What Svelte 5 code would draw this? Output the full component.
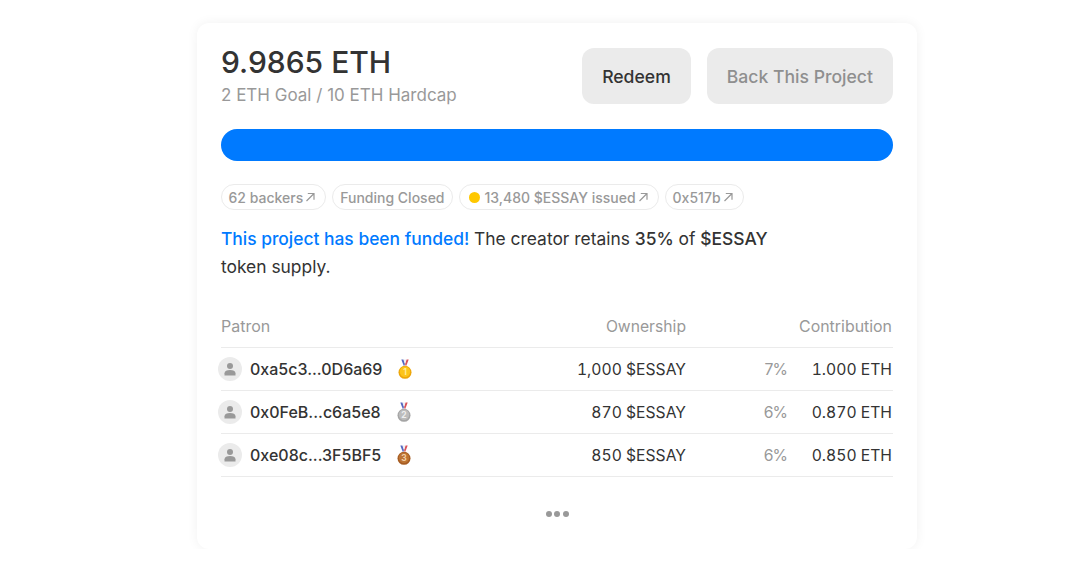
<script>
  const chips = [
    { label: '62 backers', arrow: true },
    { label: 'Funding Closed' },
    { label: '13,480 $ESSAY issued', arrow: true, dot: true },
    { label: '0x517b', arrow: true }
  ];

  const patrons = [
    { address: '0xa5c3...0D6a69', place: 1, amount: '1,000 $ESSAY', share: '7%', eth: '1.000 ETH', light: '#fcc419', dark: '#eda60a', text: '#ffeb99' },
    { address: '0x0FeB...c6a5e8', place: 2, amount: '870 $ESSAY', share: '6%', eth: '0.870 ETH', light: '#bcbcbc', dark: '#a5a5a5', text: '#eeeeee' },
    { address: '0xe08c...3F5BF5', place: 3, amount: '850 $ESSAY', share: '6%', eth: '0.850 ETH', light: '#bd7434', dark: '#a65c22', text: '#f3cfa8' }
  ];
</script>

<main class="card">
  <header class="top">
    <div>
      <h1>9.9865 ETH</h1>
      <p class="goal">2 ETH Goal / 10 ETH Hardcap</p>
    </div>
    <div class="actions">
      <button class="btn">Redeem</button>
      <button class="btn muted">Back This Project</button>
    </div>
  </header>

  <div class="bar"></div>

  <div class="chips">
    {#each chips as chip}
      <span class="chip">
        {#if chip.dot}<i class="dot"></i>{/if}
        {chip.label}
        {#if chip.arrow}
          <svg class="arrow" viewBox="-1 0 15 12" width="15" height="12" fill="none" stroke="currentColor" stroke-width="1.2">
            <path d="M2.500 10 9.500 3M3.800 2.500h6.200v6.200" />
          </svg>
        {/if}
      </span>
    {/each}
  </div>

  <p class="note">
    <span class="blue">This project has been funded!</span> The creator retains <b>35%</b> of <b>$ESSAY</b> token supply.
  </p>

  <div class="table">
    <div class="row head">
      <span>Patron</span>
      <span class="right">Ownership</span>
      <span></span>
      <span class="right">Contribution</span>
    </div>
    {#each patrons as p}
      <div class="row">
        <span class="who">
          <span class="avatar">
            <svg viewBox="0 0 24 24" width="24" height="24" fill="#999">
              <circle cx="12" cy="9" r="3" />
              <path d="M6.500 18.600v-2.400c0-2 2.400-3.200 5.500-3.200s5.500 1.200 5.500 3.200v2.400z" />
            </svg>
          </span>
          <span class="address">{p.address}</span>
          <svg class="medal" viewBox="0 0 14 20" width="14" height="20">
            <path d="M3.300 0.500h2.200L7 5 6 7.500z" fill="#5468c0" />
            <path d="M10.700 0.500H8.500L7 5 8 7.500z" fill="#d9535a" />
            <path d="M5.500 0.500h3L7 5z" fill="#eeeef4" />
            <circle cx="7" cy="13.300" r="6.500" fill={p.dark} />
            <circle cx="7" cy="12.800" r="5.200" fill={p.light} />
            <text x="7" y="16" text-anchor="middle" font-size="8.500" font-weight="700" fill={p.text}>{p.place}</text>
          </svg>
        </span>
        <span class="right nums">{p.amount}</span>
        <span class="right share">{p.share}</span>
        <span class="right nums">{p.eth}</span>
      </div>
    {/each}
  </div>

  <div class="more"><i></i><i></i><i></i></div>
</main>

<style>
  :global(body) {
    background: #fff;
  }
  .card {
    box-sizing: border-box;
    width: 720px;
    height: 526px;
    margin: 23px 0 0 197px;
    padding: 20px 24px 0;
    background: #fff;
    border-radius: 12px;
    box-shadow: 0 0 12px rgba(0, 0, 0, 0.06);
    font-family: Inter, sans-serif;
    color: #333;
  }
  .top {
    display: flex;
    justify-content: space-between;
    align-items: flex-start;
  }
  h1 {
    margin: 0;
    font-size: 30px;
    line-height: 38px;
    font-weight: 500;
  }
  .goal {
    margin: 1px 0 0;
    font-size: 17px;
    line-height: 26px;
    color: #999;
  }
  .actions {
    display: flex;
    gap: 16px;
    margin-top: 5px;
  }
  .btn {
    height: 56px;
    padding: 0 20px;
    border: none;
    border-radius: 12px;
    background: #ebebeb;
    font-family: inherit;
    font-size: 17.6px;
    font-weight: 500;
    color: #333;
  }
  .muted {
    color: #8f8f8f;
  }
  .bar {
    height: 32px;
    margin-top: 21px;
    border-radius: 16px;
    background: #007aff;
  }
  .chips {
    display: flex;
    gap: 6px;
    margin: 23px 0 0 -0.5px;
  }
  .chip {
    display: flex;
    align-items: center;
    box-sizing: border-box;
    height: 26px;
    padding: 0 7px;
    border: 1px solid #ebebeb;
    border-radius: 13px;
    font-size: 14px;
    font-weight: 500;
    color: #999;
  }
  .dot {
    width: 11px;
    height: 11px;
    margin: 0 5px 0 2px;
    border-radius: 50%;
    background: #ffc800;
  }
  .note {
    width: 570px;
    margin: 15px 0 0;
    font-size: 17.4px;
    line-height: 28px;
  }
  .blue {
    color: #007aff;
    font-weight: 500;
  }
  .note b {
    font-weight: 500;
  }
  .table {
    margin-top: 35px;
  }
  .row {
    display: grid;
    grid-template-columns: 300px 165px 101px 105px;
    align-items: center;
    height: 42px;
    border-bottom: 1px solid #ebebeb;
    font-size: 16px;
  }
  .head {
    height: 31px;
    align-items: baseline;
    color: #999;
  }
  .right {
    text-align: right;
    font-size: 15.7px;
  }
  .head span:last-child {
    font-size: 15.9px;
  }
  .nums {
    font-variant-numeric: tabular-nums;
  }
  .share {
    letter-spacing: -0.9px;
    color: #999;
  }
  .who {
    display: flex;
    align-items: center;
    margin-left: -3px;
  }
  .avatar {
    display: flex;
    width: 24px;
    height: 24px;
    margin-right: 8px;
    border-radius: 50%;
    background: #ebebeb;
  }
  .address {
    font-weight: 500;
  }
  .medal {
    margin-left: 16px;
  }
  .more {
    display: flex;
    justify-content: center;
    gap: 2.5px;
    margin-top: 34px;
  }
  .more i {
    width: 6px;
    height: 6px;
    border-radius: 50%;
    background: #999;
  }
</style>
